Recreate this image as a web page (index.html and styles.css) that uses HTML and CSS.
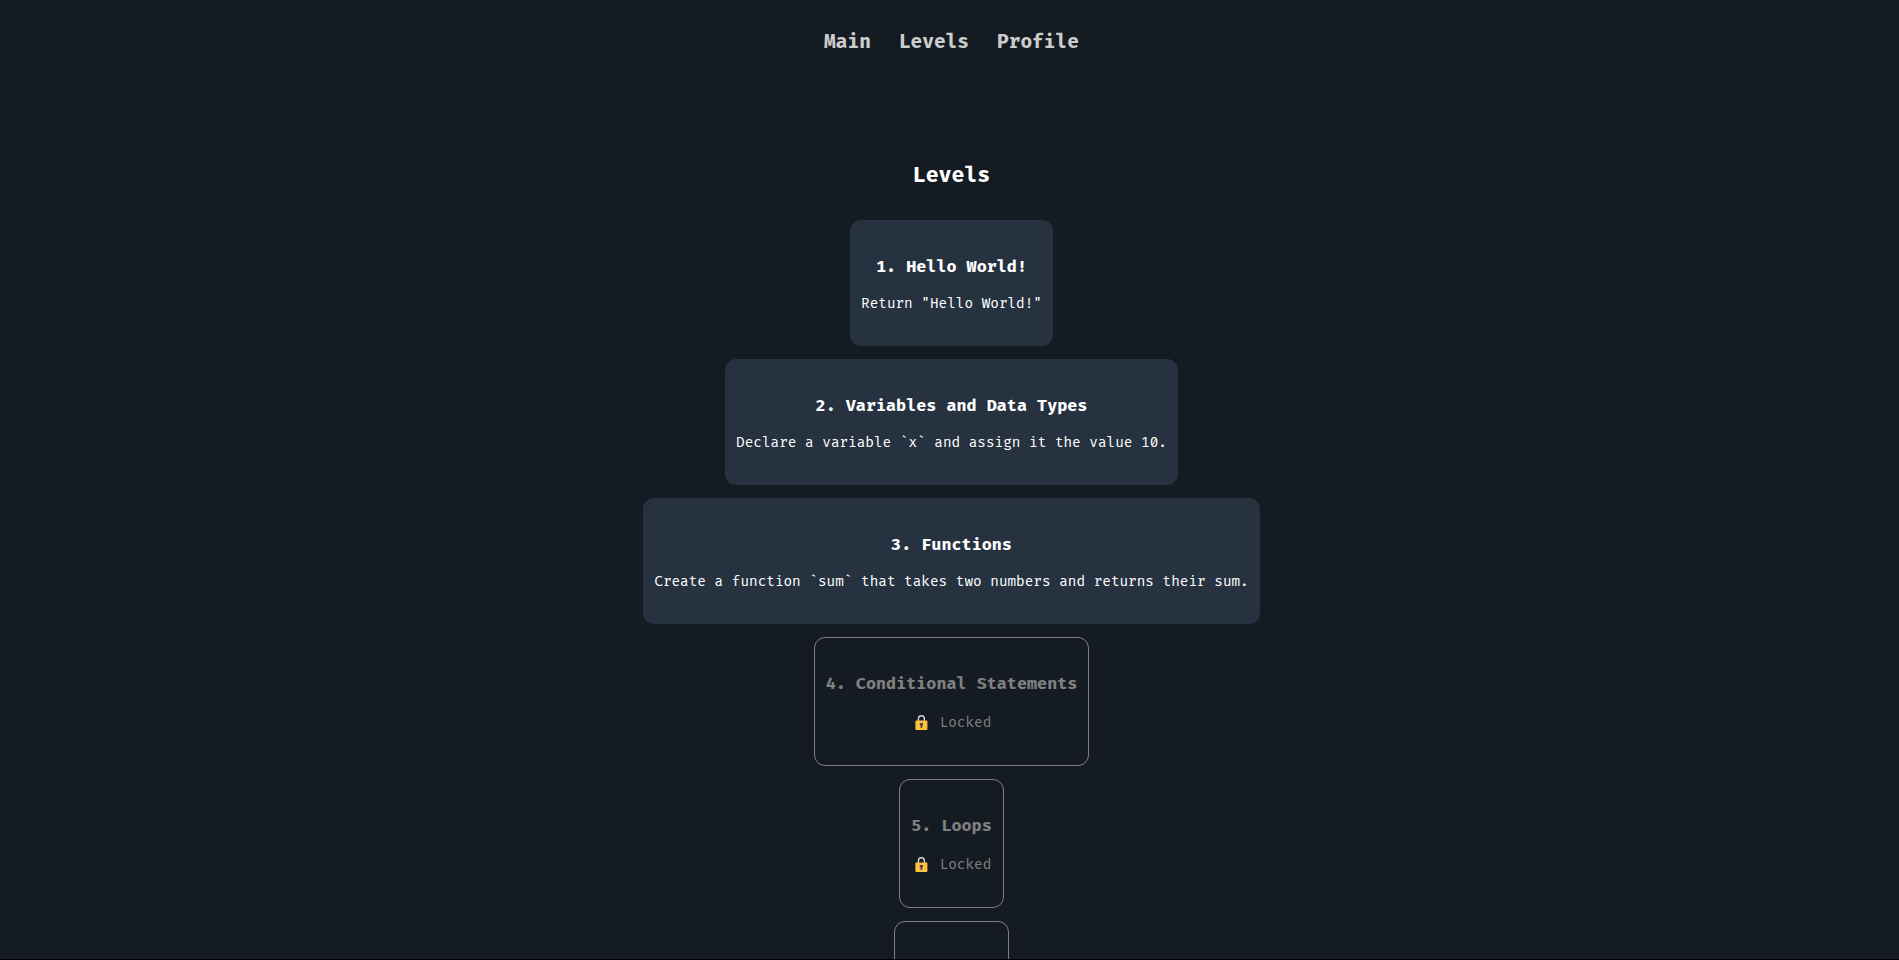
FILE: index.html
```html
<!DOCTYPE html>
<html lang="en">
<head>
<meta charset="utf-8">
<meta name="viewport" content="width=device-width, initial-scale=1">
<title>Levels</title>
<link rel="stylesheet" href="styles.css">
</head>
<body>
<svg class="sprite" aria-hidden="true">
  <symbol id="lock" viewBox="0 0 20 20">
    <path d="M6.4 8.5V6.2a3 3.4 0 0 1 6 0v2.3" fill="none" stroke="#d3d6da" stroke-width="1.4"/>
    <rect x="3.4" y="7.6" width="12" height="9.4" rx="1" fill="#fcc23c"/>
    <path d="M7.8 10H11v2.4h-.8V15H8.6v-2.6h-.8z" fill="#4b4250"/>
  </symbol>
</svg>
<div class="page">
  <nav class="nav">
    <a href="#main">Main</a>
    <a href="#levels">Levels</a>
    <a href="#profile">Profile</a>
  </nav>
  <main class="levels" id="levels">
    <h2 class="title">Levels</h2>
    <a class="card" href="#level-1">
      <h3>1. Hello World!</h3>
      <p>Return "Hello World!"</p>
    </a>
    <a class="card" href="#level-2">
      <h3>2. Variables and Data Types</h3>
      <p>Declare a variable `x` and assign it the value 10.</p>
    </a>
    <a class="card" href="#level-3">
      <h3>3. Functions</h3>
      <p>Create a function `sum` that takes two numbers and returns their sum.</p>
    </a>
    <section class="card locked">
      <h3>4. Conditional Statements</h3>
      <p><svg class="lock" aria-hidden="true"><use href="#lock"/></svg>Locked</p>
    </section>
    <section class="card locked">
      <h3>5. Loops</h3>
      <p><svg class="lock" aria-hidden="true"><use href="#lock"/></svg>Locked</p>
    </section>
    <section class="card locked">
      <h3>6. Arrays</h3>
      <p><svg class="lock" aria-hidden="true"><use href="#lock"/></svg>Locked</p>
    </section>
  </main>
</div>
</body>
</html>
```
FILE: styles.css
```css
* { box-sizing: border-box; }

body {
  margin: 0;
  background: #151b22;
  color: #fff;
  font-family: "Fira Code", "DejaVu Sans Mono", monospace;
  font-size: 14px;
  line-height: 19px;
}

h2, h3, p { margin: 0; }
a { color: inherit; text-decoration: none; }
.sprite { display: none; }

.page {
  height: 100vh;
  padding-left: 4px;
  overflow-y: auto;
  scrollbar-width: none;
  border-bottom: 1px solid #000;
}

.nav {
  display: flex;
  justify-content: center;
  gap: 28px;
  padding-top: 29px;
  color: #ccc;
  font-size: 19px;
  font-weight: 700;
  line-height: 26px;
}

.levels {
  display: flex;
  flex-direction: column;
  align-items: center;
  gap: 13px;
  padding: 107px 16px 32px;
}

.title {
  margin-bottom: 17px;
  line-height: 28px;
}

.card {
  display: flex;
  flex-direction: column;
  align-items: center;
  gap: 17px;
  padding: 37px 11px 33px;
  border-radius: 11px;
  background: #263240;
  text-align: center;
}

.card h3 { line-height: 20px; }

.locked {
  gap: 19px;
  padding: 36px 11px 32px;
  border: 1px solid #808080;
  background: none;
  color: #808080;
}

.locked p {
  display: flex;
  align-items: center;
  gap: 8px;
  line-height: 20px;
}

.lock {
  width: 20px;
  height: 20px;
}
```
